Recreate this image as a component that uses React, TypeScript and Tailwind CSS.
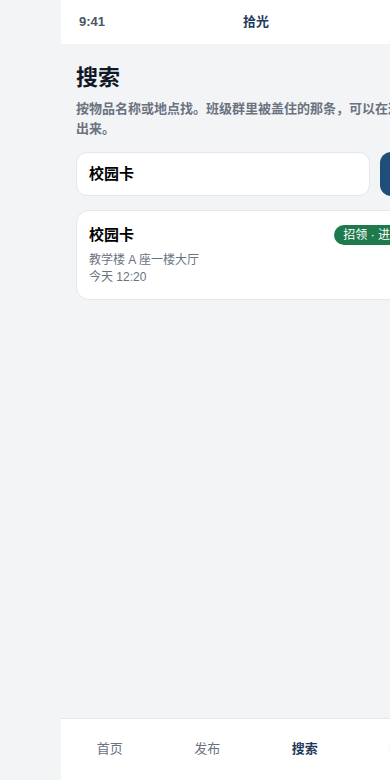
import React from "react";

const font = { fontFamily: '"Liberation Sans", "Noto Sans CJK SC", sans-serif' };

export default function App() {
  return (
    <div className="w-[390px] h-[780px] overflow-hidden bg-[#f3f4f6] flex" style={font}>
      <div className="w-[61px] shrink-0" />
      <div className="w-[390px] shrink-0 h-full flex flex-col">
        <div className="h-[44px] bg-white flex items-center justify-between px-[18px] relative shrink-0">
          <span className="text-[13px] font-bold text-[#4b5563]">9:41</span>
          <span className="absolute left-1/2 -translate-x-1/2 text-[13px] font-bold text-[#1f3b5c]">拾光</span>
          <span className="text-[12px] font-bold text-[#4b5563]">5G ▮</span>
        </div>
        <div className="flex-1 px-[15px] pt-[19px]">
          <h1 className="text-[22px] leading-[30px] font-bold text-[#111827]">搜索</h1>
          <p className="mt-[6px] text-[13px] leading-[20px] font-bold text-[#6b7280]">
            按物品名称或地点找。班级群里被盖住的那条，可以在这里搜出来。
          </p>
          <div className="mt-[13px] flex gap-[10px]">
            <div className="flex-1 h-[44px] bg-white border border-[#e5e7eb] rounded-[11px] flex items-center px-[12px]">
              <span className="text-[15px] font-bold text-black">校园卡</span>
            </div>
            <button className="w-[56px] h-[44px] rounded-[11px] bg-[#1f4e79] text-white text-[14px] font-bold">
              搜索
            </button>
          </div>
          <div className="mt-[14px] bg-white border border-[#e5e7eb] rounded-[13px] px-[12px] pt-[13px] pb-[13px]">
            <div className="flex items-center justify-between">
              <span className="text-[15px] leading-[22px] font-bold text-black">校园卡</span>
              <span className="h-[20px] px-[9px] rounded-full bg-[#1e7a4c] text-white text-[12px] leading-[20px] whitespace-nowrap">
                招领 · 进行中
              </span>
            </div>
            <div className="mt-[6px] text-[12px] leading-[17px] text-[#6b7280]">教学楼 A 座一楼大厅</div>
            <div className="text-[12px] leading-[17px] text-[#6b7280]">今天 12:20</div>
          </div>
        </div>
        <div className="h-[62px] shrink-0 bg-white border-t border-[#e5e7eb] grid grid-cols-4 items-center pb-[2px]">
          <span className="text-center text-[13px] text-[#6b7280]">首页</span>
          <span className="text-center text-[13px] text-[#6b7280]">发布</span>
          <span className="text-center text-[13px] font-bold text-[#1f3b5c]">搜索</span>
          <span className="text-center text-[13px] text-[#6b7280]">我的</span>
        </div>
      </div>
    </div>
  );
}
